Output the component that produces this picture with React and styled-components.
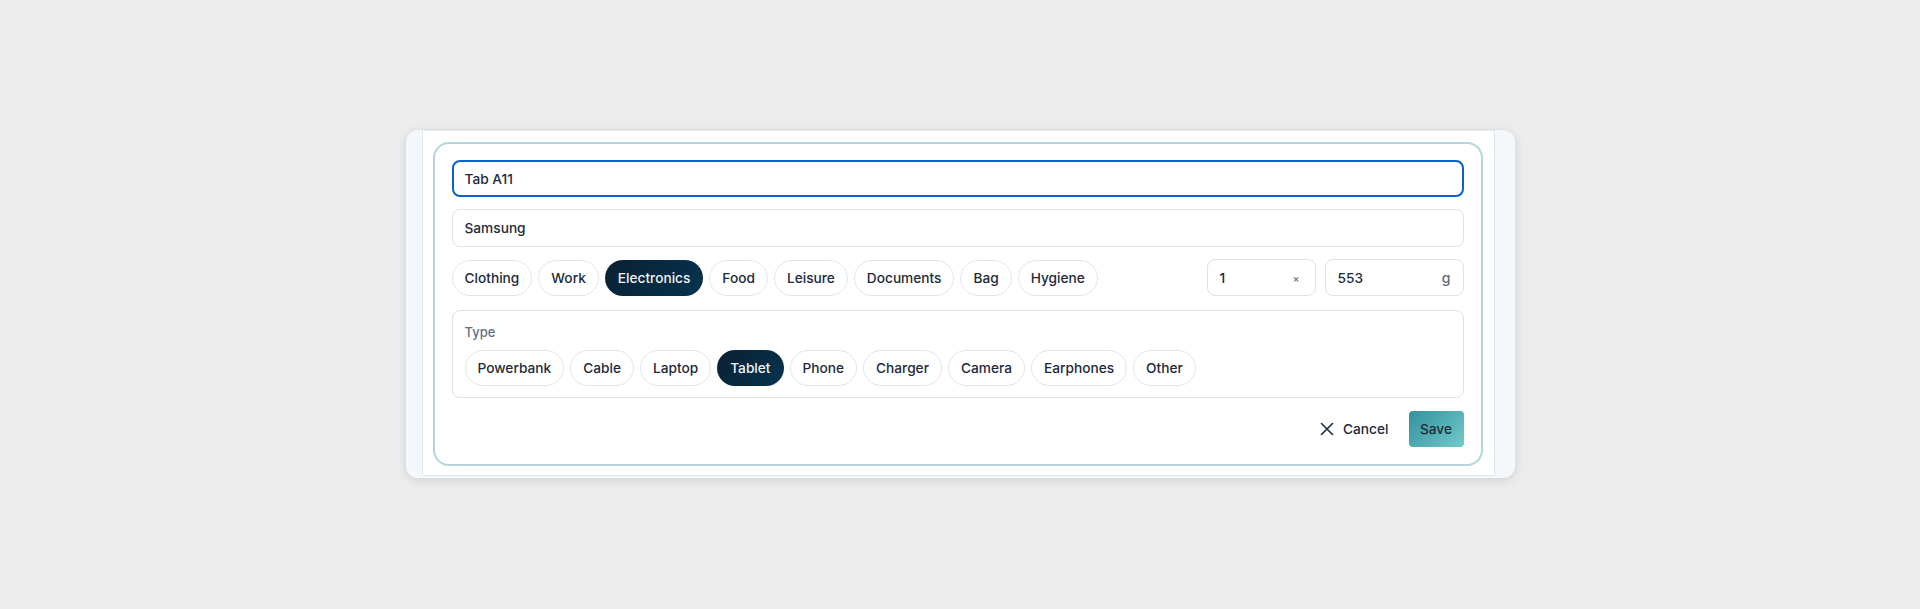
import React from "react";
import styled, { createGlobalStyle } from "styled-components";

const Global = createGlobalStyle`
  html, body { margin: 0; padding: 0; background: #ececec; }
  body { font-family: "Inter", "Liberation Sans", sans-serif; color: #1c2a3a; }
  * { box-sizing: border-box; }
`;

const Page = styled.div`
  width: 1920px;
  height: 609px;
  display: flex;
  justify-content: center;
  align-items: flex-start;
  padding-top: 130px;
`;

const Card = styled.div`
  width: 1109px;
  background: #f4f8fb;
  border-radius: 12px;
  box-shadow: 0 2px 10px rgba(0, 0, 0, 0.12);
  padding: 0 20px 2px 16px;
  display: flex;
`;

const Panel = styled.div`
  flex: 1;
  background: #fff;
  border: 1px solid #dfe6ec;
  padding: 11px 11px 9px 10px;
`;

const Form = styled.div`
  border: 2px solid #b3d5db;
  border-radius: 16px;
  padding: 16px 17px 17px 17px;
  display: flex;
  flex-direction: column;
  gap: 12px;
`;

const TextField = styled.div`
  height: ${(p) => (p.$focused ? 37 : 38)}px;
  border-radius: 8px;
  border: ${(p) => (p.$focused ? "2px solid #0a60cc" : "1px solid #dbe3ea")};
  padding: 0 ${(p) => (p.$focused ? 11 : 12)}px;
  display: flex;
  align-items: center;
  font-size: 13.7px;
  font-weight: 500;
  color: #1c2a3a;
`;

const Row = styled.div`
  display: flex;
  align-items: center;
  gap: 12px;
  height: 37px;
`;

const Chips = styled.div`
  display: flex;
  gap: 6px;
  flex: 1;
  flex-wrap: wrap;
`;

const Chip = styled.button`
  height: 36px;
  padding: 0 12px;
  border-radius: 18px;
  border: 1px solid ${(p) => (p.$active ? "transparent" : "#dde6ec")};
  background: ${(p) =>
    p.$active ? "linear-gradient(135deg, #0b1f31 0%, #053450 100%)" : "#fff"};
  color: ${(p) => (p.$active ? "#eef3f7" : "#1c2a3a")};
  font-family: inherit;
  font-size: 13.7px;
  font-weight: 500;
  cursor: pointer;
`;

const NumGroup = styled.div`
  display: flex;
  gap: 9px;
`;

const NumField = styled.div`
  width: ${(p) => p.$w}px;
  height: 37px;
  border: 1px solid #dbe3ea;
  border-radius: 8px;
  display: flex;
  align-items: center;
  justify-content: space-between;
  padding: 0 12px;
  font-size: 13.7px;
  font-weight: 500;
`;

const Unit = styled.span`
  color: #5f6b78;
  font-size: ${(p) => (p.$tiny ? 10 : 14)}px;
  padding-right: ${(p) => (p.$tiny ? 3 : 0)}px;
`;

const TypeBox = styled.div`
  border: 1px solid #dbe3ea;
  border-radius: 8px;
  padding: 12px 12px 11px 12px;
  display: flex;
  flex-direction: column;
  gap: 9px;
  height: 88px;
  margin-top: 2px;
`;

const Label = styled.div`
  font-size: 13px;
  font-weight: 500;
  color: #64707e;
  line-height: 18px;
`;

const Footer = styled.div`
  display: flex;
  justify-content: flex-end;
  align-items: center;
  gap: 8px;
  margin-top: 1px;
`;

const CancelButton = styled.button`
  height: 36px;
  padding: 0 12px;
  border: none;
  background: transparent;
  display: flex;
  align-items: center;
  gap: 9px;
  font-family: inherit;
  font-size: 13.7px;
  font-weight: 500;
  color: #1c2a3a;
  cursor: pointer;
`;

const SaveButton = styled.button`
  height: 36px;
  width: 55px;
  border: none;
  border-radius: 4px;
  background: linear-gradient(135deg, #34909c 0%, #70cbcb 100%);
  font-family: inherit;
  font-size: 13.7px;
  font-weight: 500;
  color: #1b2e3d;
  cursor: pointer;
`;

const categories = ["Clothing", "Work", "Electronics", "Food", "Leisure", "Documents", "Bag", "Hygiene"];
const types = ["Powerbank", "Cable", "Laptop", "Tablet", "Phone", "Charger", "Camera", "Earphones", "Other"];

export default function App() {
  return (
    <>
      <Global />
      <Page>
        <Card>
          <Panel>
            <Form>
              <TextField $focused>Tab A11</TextField>
              <TextField>Samsung</TextField>
              <Row>
                <Chips>
                  {categories.map((c) => (
                    <Chip key={c} $active={c === "Electronics"}>{c}</Chip>
                  ))}
                </Chips>
                <NumGroup>
                  <NumField $w={109}>
                    <span>1</span>
                    <Unit $tiny>×</Unit>
                  </NumField>
                  <NumField $w={139}>
                    <span>553</span>
                    <Unit>g</Unit>
                  </NumField>
                </NumGroup>
              </Row>
              <TypeBox>
                <Label>Type</Label>
                <Chips>
                  {types.map((t) => (
                    <Chip key={t} $active={t === "Tablet"}>{t}</Chip>
                  ))}
                </Chips>
              </TypeBox>
              <Footer>
                <CancelButton>
                  <svg width="14" height="14" viewBox="0 0 14 14" fill="none" stroke="#1c2a3a" strokeWidth="1.6" strokeLinecap="round">
                    <path d="M1.5 1.5 L12.5 12.5 M12.5 1.5 L1.5 12.5" />
                  </svg>
                  Cancel
                </CancelButton>
                <SaveButton>Save</SaveButton>
              </Footer>
            </Form>
          </Panel>
        </Card>
      </Page>
    </>
  );
}
